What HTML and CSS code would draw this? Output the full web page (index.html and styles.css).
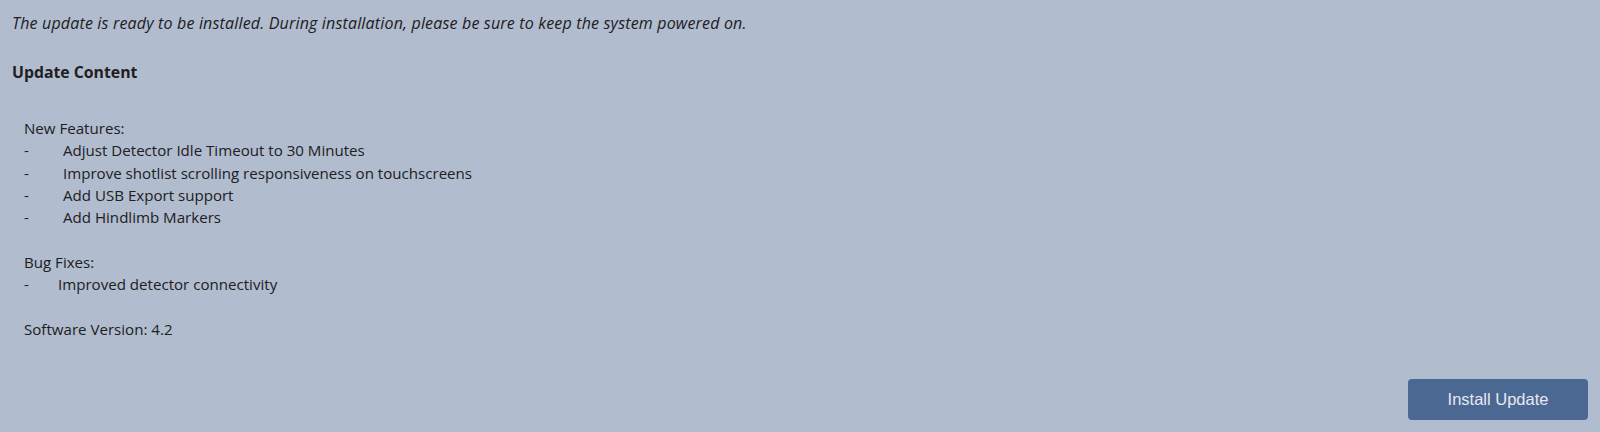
FILE: index.html
```html
<!DOCTYPE html>
<html>
<head>
<meta charset="utf-8">
<link rel="stylesheet" href="styles.css">
</head>
<body>
<div class="page">
  <p class="intro">The update is ready to be installed. During installation, please be sure to keep the system powered on.</p>
  <h2 class="title">Update Content</h2>
  <div class="notes">
    <div class="line">New Features:</div>
    <div class="line item"><span class="dash">-</span><span>Adjust Detector Idle Timeout to 30 Minutes</span></div>
    <div class="line item"><span class="dash">-</span><span>Improve shotlist scrolling responsiveness on touchscreens</span></div>
    <div class="line item"><span class="dash">-</span><span>Add USB Export support</span></div>
    <div class="line item"><span class="dash">-</span><span>Add Hindlimb Markers</span></div>
    <div class="line blank"></div>
    <div class="line">Bug Fixes:</div>
    <div class="line item"><span class="dash narrow">-</span><span>Improved detector connectivity</span></div>
    <div class="line blank"></div>
    <div class="line">Software Version: 4.2</div>
  </div>
  <div class="actions">
    <button class="install">Install Update</button>
  </div>
</div>
</body>
</html>
```

FILE: styles.css
```css
html, body {
  margin: 0;
  padding: 0;
  height: 100%;
}
body {
  background: #b1bccf;
  color: #202020;
  font-family: "Open Sans", "Noto Sans", sans-serif;
  font-size: 15.1px;
}
.page {
  box-sizing: border-box;
  height: 100%;
  padding: 12px;
  display: flex;
  flex-direction: column;
}
.intro {
  margin: 0;
  font-style: italic;
  font-size: 16px;
  letter-spacing: 0.17px;
  line-height: 22px;
}
.title {
  margin: 27px 0 0 0;
  font-size: 15.8px;
  font-weight: 700;
  line-height: 22px;
}
.notes {
  margin-top: 34px;
  padding-left: 12px;
}
.line {
  line-height: 22.35px;
  height: 22.35px;
  white-space: nowrap;
}
.item {
  display: flex;
}
.dash {
  display: inline-block;
  width: 39px;
}
.dash.narrow {
  width: 34px;
}
.actions {
  margin-top: auto;
  display: flex;
  justify-content: flex-end;
}
.install {
  width: 180px;
  height: 41px;
  border: none;
  border-radius: 4px;
  background: #4b6892;
  color: #e6e9ef;
  font-family: "Liberation Sans", Arial, sans-serif;
  font-size: 16.5px;
}
```
